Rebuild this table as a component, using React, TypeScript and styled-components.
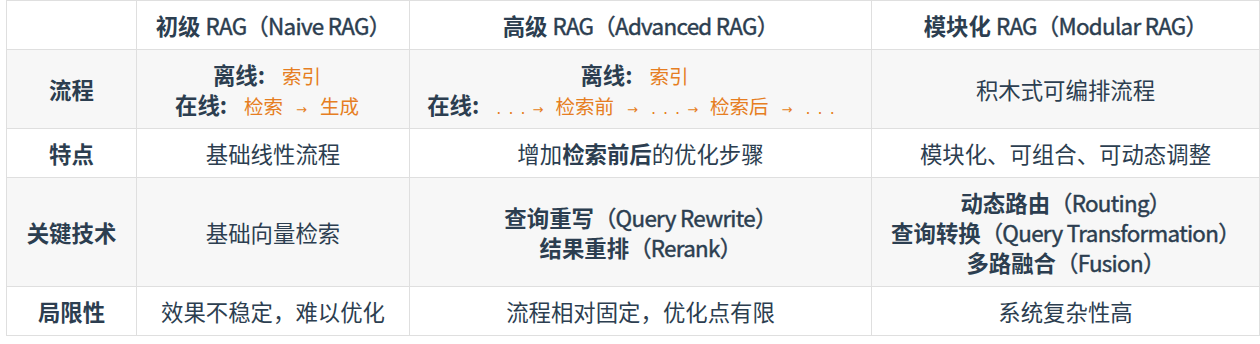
import styled, { createGlobalStyle } from "styled-components";

const GlobalStyle = createGlobalStyle`
  html, body {
    margin: 0;
    padding: 0;
    background: #ffffff;
  }
  body {
    font-family: "Noto Sans CJK SC", "Noto Sans", sans-serif;
    color: #2c3e50;
  }
`;

type Token = { kind: "text" | "arrow" | "dots"; value?: string };

const Page = styled.div`
  padding: 0 0 0 6px;
`;

const Table = styled.table`
  border-collapse: collapse;
  table-layout: fixed;
  width: 1253px;
  font-size: 22.4px;
  line-height: 30px;
`;

const Row = styled.tr<{ $striped?: boolean }>`
  background: ${(p) => (p.$striped ? "#f7f7f7" : "#ffffff")};
`;

const HeadCell = styled.th`
  border: 1px solid #dfdfdf;
  padding: 9px 6px;
  font-weight: 700;
  text-align: center;
  white-space: nowrap;
`;

const Cell = styled.td<{ $bold?: boolean }>`
  border: 1px solid #dfdfdf;
  padding: 9px 6px;
  text-align: center;
  vertical-align: middle;
  white-space: nowrap;
  font-weight: ${(p) => (p.$bold ? 700 : 400)};
`;

// latin runs in the bold cells render semi-bold in the original
const Latin = styled.span`
  font-weight: 400;
  letter-spacing: -0.7px;
  -webkit-text-stroke: 0.45px currentColor;
`;

const Line = styled.div`
  display: block;
`;

const FlowLine = styled.div`
  display: flex;
  justify-content: center;
  align-items: baseline;
  height: 30px;
  line-height: 30px;
  padding-right: 12px;
`;

const Label = styled.b`
  font-weight: 700;
  margin-right: 17px;
`;

const Orange = styled.span`
  color: #e67e22;
  font-size: 19.5px;
  font-weight: 400;
`;

const Arrow = styled.span<{ $tight?: boolean }>`
  color: #e67e22;
  font-family: "DejaVu Sans", sans-serif;
  font-size: 13px;
  margin: ${(p) => (p.$tight ? "0 12px 0 0" : "0 13px")};
`;

const Dots = styled.span`
  color: #e67e22;
  font-family: "DejaVu Sans", sans-serif;
  font-size: 16px;
  letter-spacing: 7px;
`;

const Flow = ({ label, tokens }: { label: string; tokens: Token[] }) => (
  <FlowLine>
    <Label>{label}:</Label>
    {tokens.map((t, i) => {
      if (t.kind === "arrow")
        return (
          <Arrow key={i} $tight={tokens[i - 1]?.kind === "dots"}>
            →
          </Arrow>
        );
      if (t.kind === "dots") return <Dots key={i}>...</Dots>;
      return <Orange key={i}>{t.value}</Orange>;
    })}
  </FlowLine>
);

const txt = (value: string): Token => ({ kind: "text", value });
const arrow: Token = { kind: "arrow" };
const dots: Token = { kind: "dots" };

const App = () => {
  return (
    <Page>
      <GlobalStyle />
      <Table>
        <colgroup>
          <col style={{ width: 130 }} />
          <col style={{ width: 273 }} />
          <col style={{ width: 462 }} />
          <col style={{ width: 388 }} />
        </colgroup>
        <thead>
          <Row>
            <HeadCell></HeadCell>
            <HeadCell>
              初级 <Latin>RAG（Naive RAG）</Latin>
            </HeadCell>
            <HeadCell>
              高级 <Latin>RAG（Advanced RAG）</Latin>
            </HeadCell>
            <HeadCell>
              模块化 <Latin>RAG（Modular RAG）</Latin>
            </HeadCell>
          </Row>
        </thead>
        <tbody>
          <Row $striped>
            <Cell $bold>流程</Cell>
            <Cell>
              <Flow label="离线" tokens={[txt("索引")]} />
              <Flow label="在线" tokens={[txt("检索"), arrow, txt("生成")]} />
            </Cell>
            <Cell>
              <Flow label="离线" tokens={[txt("索引")]} />
              <Flow
                label="在线"
                tokens={[
                  dots,
                  arrow,
                  txt("检索前"),
                  arrow,
                  dots,
                  arrow,
                  txt("检索后"),
                  arrow,
                  dots,
                ]}
              />
            </Cell>
            <Cell>积木式可编排流程</Cell>
          </Row>
          <Row>
            <Cell $bold>特点</Cell>
            <Cell>基础线性流程</Cell>
            <Cell>
              增加<b>检索前后</b>的优化步骤
            </Cell>
            <Cell>模块化、可组合、可动态调整</Cell>
          </Row>
          <Row $striped>
            <Cell $bold>关键技术</Cell>
            <Cell>基础向量检索</Cell>
            <Cell $bold>
              <Line>
                查询重写<Latin>（Query Rewrite）</Latin>
              </Line>
              <Line>
                结果重排<Latin>（Rerank）</Latin>
              </Line>
            </Cell>
            <Cell $bold>
              <Line>
                动态路由<Latin>（Routing）</Latin>
              </Line>
              <Line>
                查询转换<Latin>（Query Transformation）</Latin>
              </Line>
              <Line>
                多路融合<Latin>（Fusion）</Latin>
              </Line>
            </Cell>
          </Row>
          <Row>
            <Cell $bold>局限性</Cell>
            <Cell>效果不稳定，难以优化</Cell>
            <Cell>流程相对固定，优化点有限</Cell>
            <Cell>系统复杂性高</Cell>
          </Row>
        </tbody>
      </Table>
    </Page>
  );
};

export default App;
